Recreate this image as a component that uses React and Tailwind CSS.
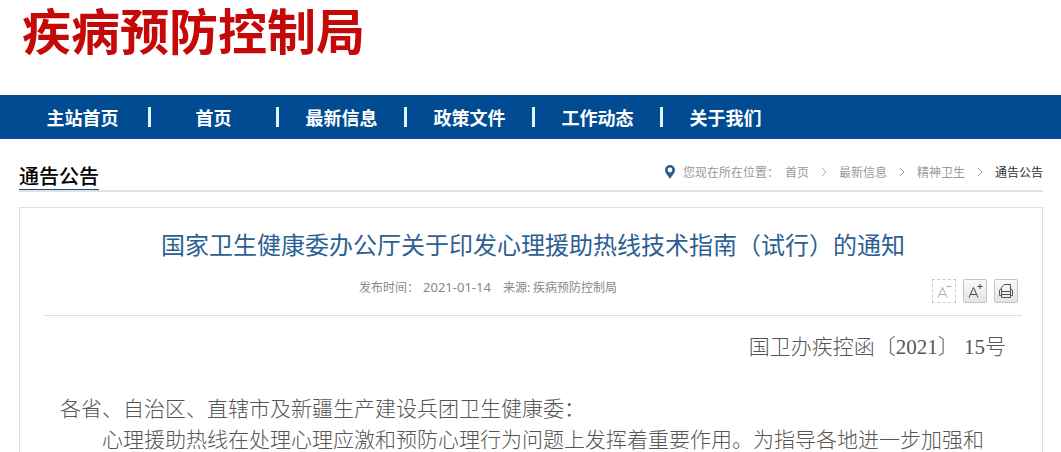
const navItems = ["主站首页", "首页", "最新信息", "政策文件", "工作动态", "关于我们"];
const crumbs = ["首页", "最新信息", "精神卫生"];

function PinIcon() {
  return (
    <svg viewBox="0 0 10 14" className="h-3.5 w-2.5" aria-hidden="true">
      <path
        fillRule="evenodd"
        fill="#235f94"
        d="M5 0a5 5 0 0 0-5 5c0 3 3 5.500 5 9 2-3.500 5-6 5-9a5 5 0 0 0-5-5Zm0 2.600a2.400 2.400 0 1 1 0 4.800 2.400 2.400 0 0 1 0-4.800Z"
      />
    </svg>
  );
}

function ChevronIcon() {
  return (
    <svg viewBox="0 0 6 10" className="h-2.5 w-1.5" fill="none" stroke="#a3a3a3" aria-hidden="true">
      <path d="M1 1l4 4-4 4" />
    </svg>
  );
}

function LetterIcon({ plus }) {
  return (
    <svg viewBox="0 0 22 22" className="size-[22px]" fill="none" stroke="currentColor" aria-hidden="true">
      <path d="M5 17.500 9.500 7.500 14 17.500M6.500 14.500h6" />
      <path d={plus ? "M13.500 6.500h5M16 4v5" : "M13.500 6.500h5"} />
    </svg>
  );
}

function PrintIcon() {
  return (
    <svg viewBox="0 0 22 22" className="size-[22px]" fill="none" stroke="currentColor" aria-hidden="true">
      <path d="M6.500 9V7.500L9 4.500h6.500V9" />
      <path d="M6.500 8.500 4.500 10v5.500h2M15.500 8.500l2 1.500v5.500h-2" />
      <path d="M6.500 11.500h9M6.500 14.500h9M6.500 9v8.500h9V9" />
    </svg>
  );
}

const toolButton = "flex size-6 items-center justify-center border";

export default function App() {
  return (
    <div className="h-screen overflow-hidden bg-white font-['Noto_Sans_CJK_SC',sans-serif]">
      <header>
        <div className="h-[95px] px-[22px]">
          <h1 className="text-[49px] leading-[58px] font-bold whitespace-nowrap text-[#c50808]">疾病预防控制局</h1>
        </div>
        <nav className="flex h-11 items-center bg-[#004b92] pl-[17px] text-lg font-bold text-white">
          {navItems.map((item, i) => (
            <div key={item} className="flex items-center">
              {i > 0 && <span className="h-5 w-[3px] bg-[#e0f6ff]" />}
              <a href="#" className={i === 0 ? "w-[131px] text-center" : "w-[125px] text-center"}>
                {item}
              </a>
            </div>
          ))}
        </nav>
      </header>

      <main className="pr-[18px] pl-[19px]">
        <div className="flex h-[53px] items-end justify-between border-b-2 border-[#dfe2e4]">
          <h2 className="border-b border-[#1d4f80] text-xl leading-[26px] font-medium text-black">通告公告</h2>
          <div className="flex items-center pb-2 text-xs leading-5 text-[#999]">
            <PinIcon />
            <span className="ml-2">您现在所在位置：</span>
            <nav className="ml-1.5 flex items-center">
              {crumbs.map((crumb) => (
                <div key={crumb} className="flex items-center">
                  <a href="#">{crumb}</a>
                  <span className="flex w-[30px] justify-center">
                    <ChevronIcon />
                  </span>
                </div>
              ))}
              <span className="text-[#333]">通告公告</span>
            </nav>
          </div>
        </div>

        <article className="mt-[15px] border border-[#dcdfe2] pr-5 pb-6 pl-6">
          <h3 className="pt-[18px] text-center text-2xl leading-9 font-normal text-[#2d5f93]">
            国家卫生健康委办公厅关于印发心理援助热线技术指南（试行）的通知
          </h3>
          <div className="flex border-b border-[#dedede] pt-[13px] pb-3">
            <div className="flex flex-1 justify-center gap-3 text-xs leading-6 text-[#888]">
              <span className="flex gap-1">
                发布时间：<time className="font-['Noto_Sans',sans-serif] text-[13px]">2021-01-14</time>
              </span>
              <span>来源: 疾病预防控制局</span>
            </div>
            <div className="flex items-start gap-[7px] pt-1 pr-1">
              <button type="button" aria-label="缩小字体" className={`${toolButton} border-dashed border-[#ccc] text-[#aaa]`}>
                <LetterIcon />
              </button>
              <button type="button" aria-label="放大字体" className={`${toolButton} rounded-xs border-[#c4c4c4] bg-linear-to-b from-[#fafafa] to-[#e4e4e4] text-[#444]`}>
                <LetterIcon plus />
              </button>
              <button type="button" aria-label="打印" className={`${toolButton} rounded-xs border-[#c4c4c4] bg-linear-to-b from-[#fafafa] to-[#e4e4e4] text-[#555]`}>
                <PrintIcon />
              </button>
            </div>
          </div>
          <div className="px-4 pt-4 font-['Liberation_Serif','Noto_Sans_CJK_SC',serif] text-[21px] leading-[31px] font-light text-[#555]">
            <p className="mb-[31px] text-right">国卫办疾控函〔2021〕 15号</p>
            <p>各省、自治区、直辖市及新疆生产建设兵团卫生健康委：</p>
            <p className="indent-[2em]">
              心理援助热线在处理心理应激和预防心理行为问题上发挥着重要作用。为指导各地进一步加强和
            </p>
          </div>
        </article>
      </main>
    </div>
  );
}
